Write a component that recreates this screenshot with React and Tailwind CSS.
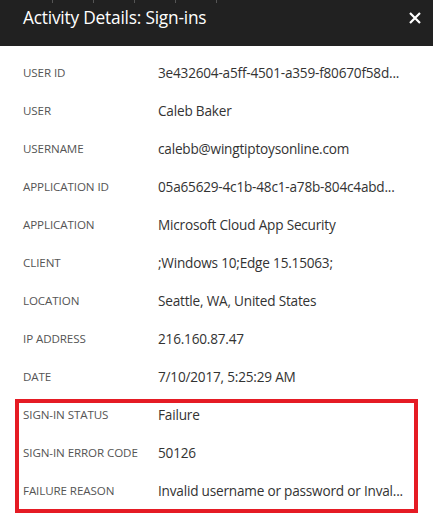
import React from "react";

const rows = [
  ["USER ID", "3e432604-a5ff-4501-a359-f80670f58d..."],
  ["USER", "Caleb Baker"],
  ["USERNAME", "calebb@wingtiptoysonline.com"],
  ["APPLICATION ID", "05a65629-4c1b-48c1-a78b-804c4abd..."],
  ["APPLICATION", "Microsoft Cloud App Security"],
  ["CLIENT", ";Windows 10;Edge 15.15063;"],
  ["LOCATION", "Seattle, WA, United States"],
  ["IP ADDRESS", "216.160.87.47"],
  ["DATE", "7/10/2017, 5:25:29 AM"],
  ["SIGN-IN STATUS", "Failure"],
  ["SIGN-IN ERROR CODE", "50126"],
  ["FAILURE REASON", "Invalid username or password or Inval..."],
];

export default function App() {
  return (
    <div
      className="w-[433px] h-[522px] bg-white overflow-hidden"
      style={{ fontFamily: '"Open Sans", "Noto Sans", sans-serif' }}
    >
      <div className="relative h-[46px] bg-[#212121] flex items-start justify-between pl-[23px] pr-[10px] pt-[6px]">
        <div className="absolute top-0 left-0 flex">
          <span className="ml-[52px] w-px h-[3px] bg-[#555]" />
          <span className="ml-[40px] w-px h-[3px] bg-[#555]" />
          <span className="ml-[40px] w-px h-[3px] bg-[#555]" />
          <span className="ml-[40px] w-px h-[3px] bg-[#555]" />
          <span className="ml-[40px] w-px h-[3px] bg-[#555]" />
        </div>
        <span className="text-white text-[17.3px] leading-[24px] tracking-[-0.2px]">
          Activity Details: Sign-ins
        </span>
        <svg width="16" height="16" viewBox="0 0 16 16" className="mt-[4px]">
          <path d="M3 3 L13 13 M13 3 L3 13" stroke="white" strokeWidth="2.2" />
        </svg>
      </div>
      <div className="relative pt-[8px]">
        {rows.map(([label, value]) => (
          <div key={label} className="flex items-center h-[38px]">
            <div className="w-[158px] shrink-0 pl-[23px] text-[11.6px] text-[#555] tracking-[-0.1px] whitespace-nowrap">
              {label}
            </div>
            <div className="text-[13.6px] text-[#333] tracking-[-0.2px] whitespace-nowrap">
              {value}
            </div>
          </div>
        ))}
        <div className="absolute left-[15px] top-[353px] w-[403px] h-[114px] border-4 border-[#e51b24] pointer-events-none" />
      </div>
    </div>
  );
}
